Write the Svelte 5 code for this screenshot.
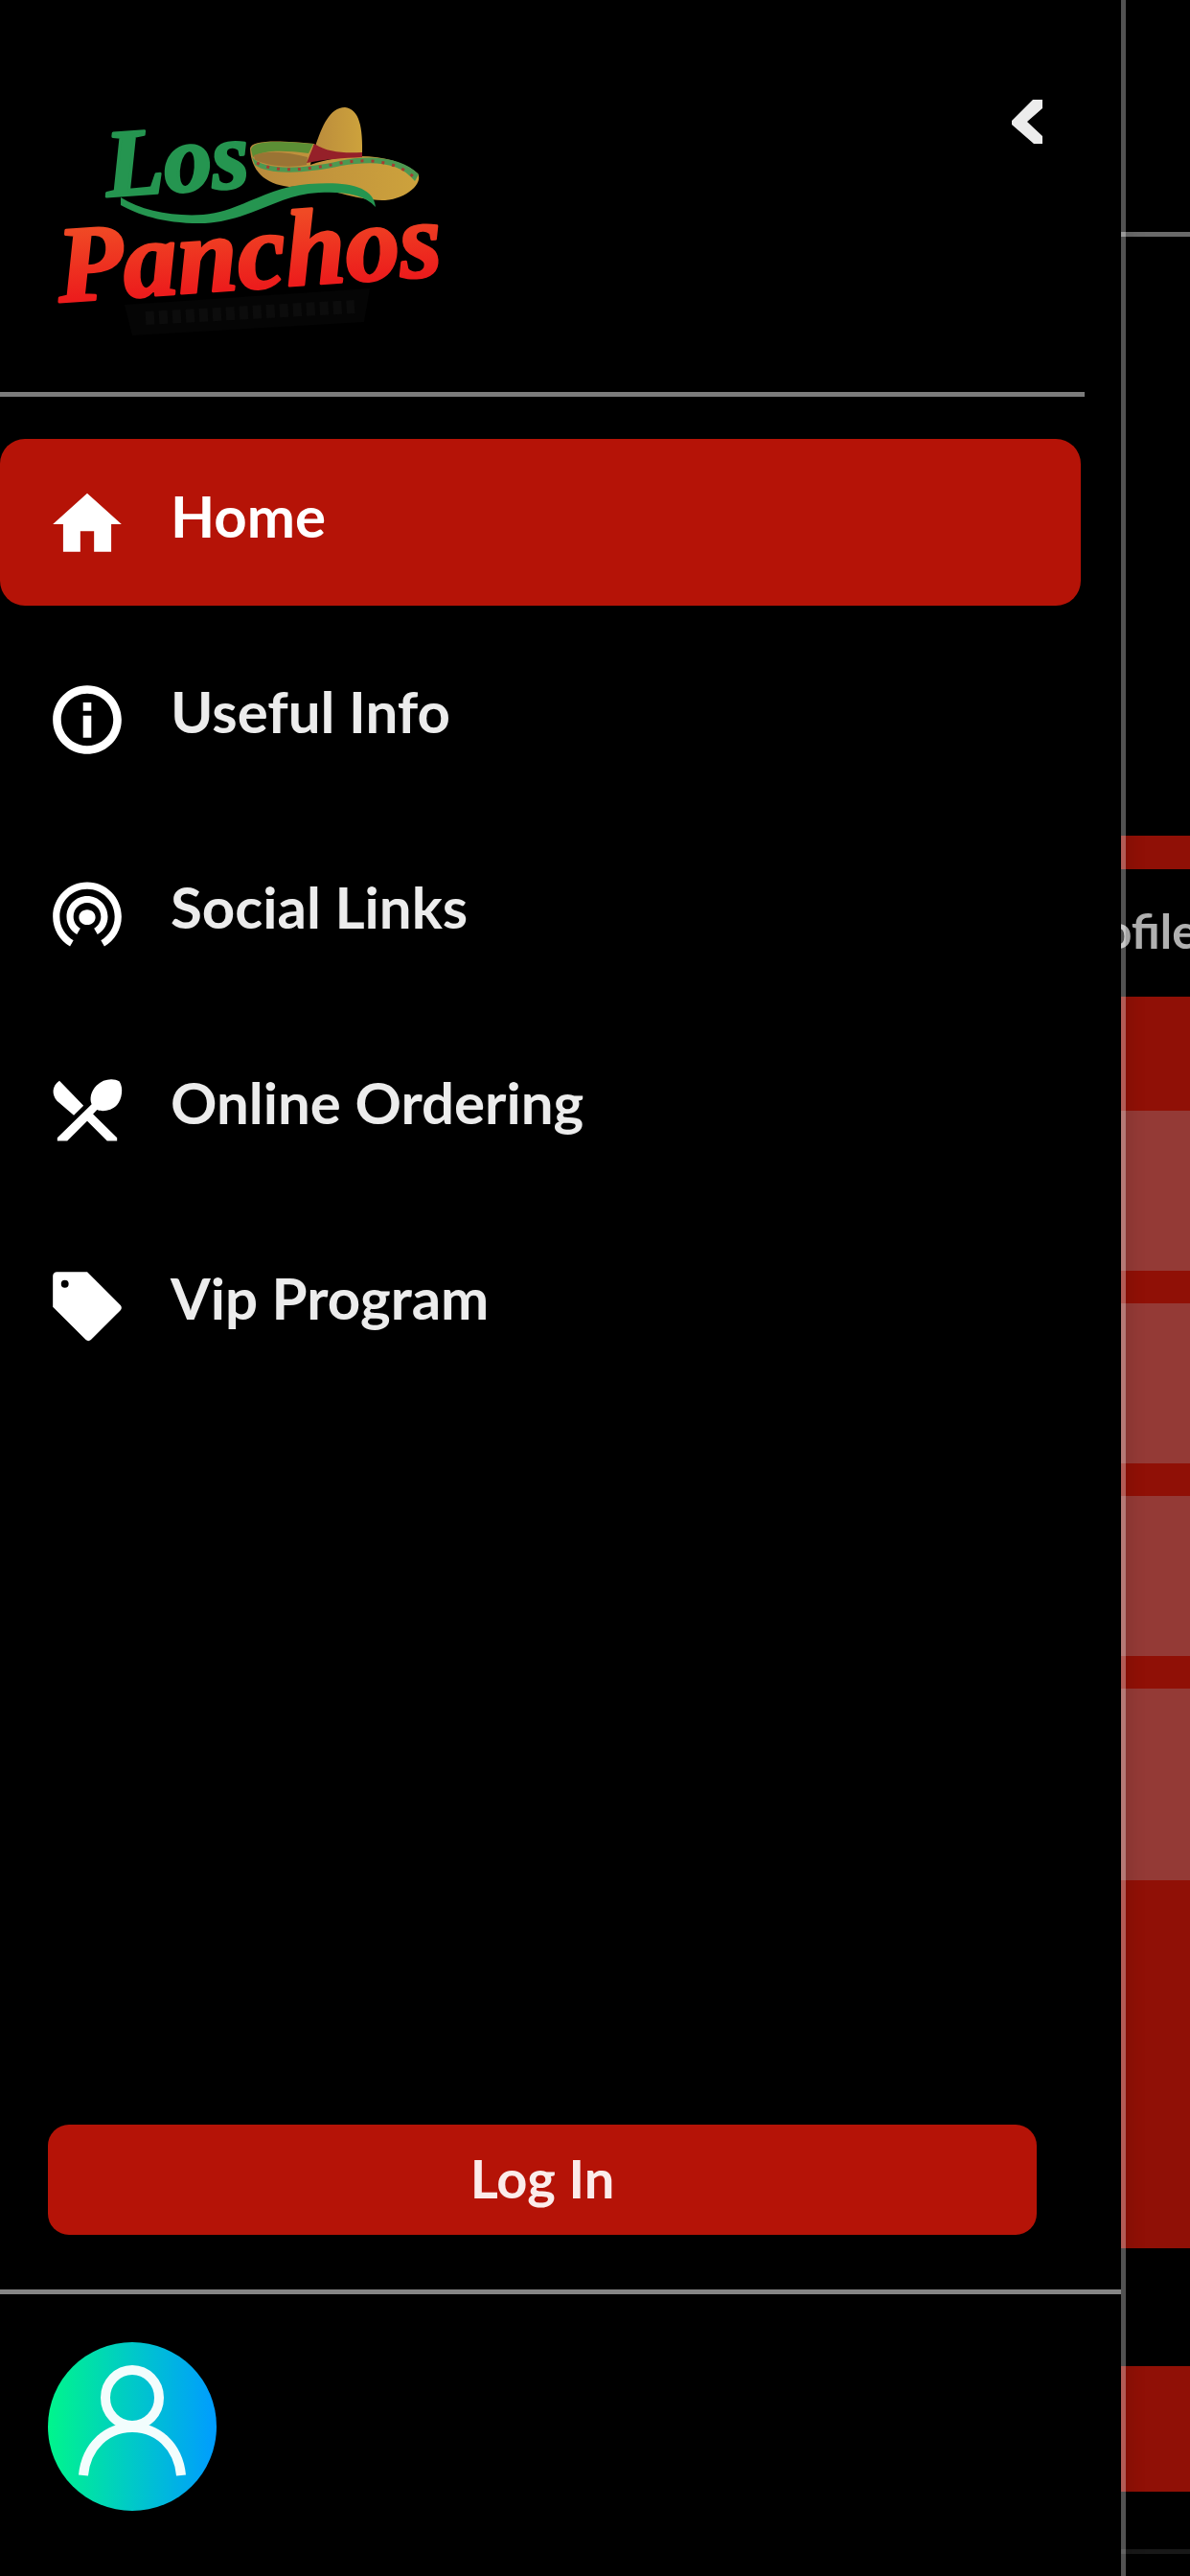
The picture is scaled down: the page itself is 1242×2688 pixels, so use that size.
<script>
  const items = [
    {
      label: 'Home',
      href: '#home',
      icon: 'M10 20v-6h4v6h5v-8h3L12 3 2 12h3v8z'
    },
    {
      label: 'Useful Info',
      href: '#info',
      icon: 'M10.8 7h2.4v2.4h-2.4zm0 3.8h2.4v6.4h-2.4zM12 2C6.48 2 2 6.48 2 12s4.48 10 10 10 10-4.48 10-10S17.52 2 12 2zm0 17.6c-4.2 0-7.6-3.4-7.6-7.6s3.4-7.6 7.6-7.6 7.6 3.4 7.6 7.6-3.4 7.6-7.6 7.6z'
    },
    {
      label: 'Social Links',
      href: '#social',
      icon: 'M12 10.4c-1.4 0-2.4 1-2.4 2.2s1 2.2 2.4 2.2 2.4-1 2.4-2.2-1-2.2-2.4-2.2zm6 2c0-3.31-2.69-6-6-6s-6 2.69-6 6c0 2.22 1.21 4.15 3 5.19l1-1.74c-1.19-.7-2-1.97-2-3.45 0-2.21 1.79-4 4-4s4 1.79 4 4c0 1.48-.81 2.75-2 3.45l1 1.74c1.79-1.04 3-2.97 3-5.19zM12 2.4C6.48 2.4 2 6.88 2 12.4c0 3.7 2.01 6.92 4.99 8.65l1-1.73C5.61 17.93 4 15.36 4 12.4c0-4.42 3.58-8 8-8s8 3.58 8 8c0 2.96-1.61 5.53-4 6.92l1 1.73c2.99-1.73 5-4.95 5-8.65 0-5.52-4.48-10-10-10z'
    },
    {
      label: 'Online Ordering',
      href: '#ordering',
      icon: 'M8.1 13.34l2.83-2.83L3.91 3.3C1.6 4.9 1.7 7.4 3.2 9.16l4.9 4.18zm6.78-1.61c1.53.71 4.2.31 5.8-1.38C22.2 8.6 22.6 5.3 21.4 3.5c-1.9-1.1-4.8-.7-6.7 1.2-1.6 1.6-2.1 3.9-1.4 5.4L3.3 19.9v.9h2.9L12 15l5.8 5.8h2.9v-.9L13.7 13l1.18-1.27z'
    },
    {
      label: 'Vip Program',
      href: '#vip',
      icon: 'M12 2H3.2C2.5 2 2 2.5 2 3.2V12.2L11.6 21.8c.5.4 1 .4 1.5 0L21.7 13.2c.4-.5.4-1 0-1.5L12 2zM5.5 6.6a1.1 1.1 0 1 1 0-2.2 1.1 1.1 0 0 1 0 2.2z'
    }
  ];

  let active = 'Home';
</script>

<div class="app">
  <aside class="drawer">
    <header class="drawer-header">
      <svg class="logo" viewBox="0 0 450 290" role="img" aria-label="Los Panchos">
        <defs>
          <linearGradient id="red" x1="0" y1="0" x2="0" y2="1">
            <stop offset="0.2" stop-color="#f04a25" />
            <stop offset="0.8" stop-color="#ec1c1c" />
          </linearGradient>
          <linearGradient id="straw" x1="0" y1="0" x2="1" y2="0">
            <stop offset="0" stop-color="#b98a3c" />
            <stop offset="1" stop-color="#cda23c" />
          </linearGradient>
        </defs>

        <!-- banner under the name -->
        <path d="M90 238L346 221L340 256L98 270Z" fill="#050505" />
        <path d="M112 252L330 240" stroke="#0c0c0c" stroke-width="14" stroke-dasharray="9 5" />

        <text class="word los" x="72" y="125" transform="rotate(-4 72 125)">Los</text>

        <!-- sombrero -->
        <path d="M221 75C222 66 250 66 288 70L284 92C330 76 375 83 396 101C402 111 385 127 362 129C330 130 300 113 262 115C236 112 222 98 221 75Z" fill="url(#straw)" />
        <path d="M222 76C224 66 250 67 287 70L282 80C256 77 235 76 224 84Z" fill="#5c8f35" />
        <path d="M225 82C240 76 262 79 281 84L280 92C258 96 238 92 226 87Z" fill="#9a7434" />
        <path d="M289 73C296 52 304 32 320 32C335 34 339 52 338 83C318 86 300 85 284 88Z" fill="url(#straw)" />
        <path d="M288 70C302 79 318 80 338 79V84C318 85 300 86 280 90Z" fill="#952029" />
        <path d="M223 84C236 99 280 96 314 88C350 80 382 86 397 102L393 109C376 88 348 88 316 93C280 101 240 103 226 92Z" fill="#4d9851" />
        <path d="M228 90C250 101 282 97 316 90C350 84 378 91 392 105" fill="none" stroke="#a83b31" stroke-width="3" stroke-dasharray="3 8" />

        <text class="word panchos" x="22" y="235" transform="rotate(-4 22 235)">Panchos</text>

        <path d="M86 126C108 140 140 146 172 144C212 140 236 116 282 112C322 109 350 114 352 136C338 120 308 119 282 122C244 128 216 151 174 153C132 154 104 144 86 134Z" fill="#259550" />
      </svg>

      <button class="close" aria-label="Close menu">
        <svg viewBox="0 0 36 48"><path d="M22 2H32V11L16 25L32 40V48H23L0 28V24Z" /></svg>
      </button>
    </header>

    <nav class="menu">
      {#each items as item}
        <a href={item.href} class:active={item.label === active} on:click={() => (active = item.label)}>
          <svg viewBox="0 0 24 24" aria-hidden="true"><path d={item.icon} /></svg>
          <span>{item.label}</span>
        </a>
      {/each}
    </nav>

    <div class="login">
      <button>Log In</button>
    </div>

    <footer class="account">
      <a href="#profile" class="avatar" aria-label="Account">
        <svg viewBox="0 0 176 176">
          <ellipse cx="88" cy="58" rx="28" ry="29" />
          <path d="M37 139C40 108 62 89 88 89S136 108 139 139" />
        </svg>
      </a>
    </footer>
  </aside>

  <main class="page">
    <div class="topbar"></div>
    <div class="hero"></div>
    <div class="stripe"></div>
    <div class="tab"><span>Profile</span></div>
    <section class="cards">
      <div class="card"></div>
      <div class="card"></div>
      <div class="card"></div>
      <div class="card tall"></div>
    </section>
    <div class="band"></div>
    <div class="bottom-line"></div>
  </main>
</div>

<style>
  :global(body) {
    margin: 0;
    background: #000;
  }

  .app {
    display: flex;
    min-height: 100vh;
    overflow: hidden;
    background: #000;
    color: #ececec;
    font-family: Lato, 'Open Sans', sans-serif;
    font-weight: 700;
  }

  /* Drawer */
  .drawer {
    flex: 0 0 auto;
    box-sizing: border-box;
    width: 94.6%;
    margin-right: -5px;
    z-index: 1;
    display: flex;
    flex-direction: column;
    background: #000;
    background-clip: padding-box;
    border-right: 5px solid rgba(255, 255, 255, 0.32);
    box-shadow: 0 0 20px rgba(0, 0, 0, 0.15);
  }

  .drawer-header {
    display: flex;
    justify-content: space-between;
    align-items: flex-start;
    height: 329px;
    margin-right: 38px;
    padding: 80px 40px 0;
    border-bottom: 5px solid #7c7c7c;
  }

  .logo {
    width: 450px;
    height: 290px;
  }

  .word {
    font-family: 'Liberation Serif', serif;
    font-weight: 700;
    font-style: italic;
    stroke-linejoin: round;
  }

  .los {
    font-size: 100px;
    fill: #259550;
    stroke: #259550;
    stroke-width: 3;
  }

  .panchos {
    font-size: 113px;
    fill: url(#red);
    stroke: url(#red);
    stroke-width: 3;
  }

  .close {
    margin-top: 22px;
    padding: 0;
    border: 0;
    background: none;
    line-height: 0;
    cursor: pointer;
  }

  .close svg {
    width: 36px;
    height: 48px;
    fill: #ececec;
  }

  .menu {
    display: flex;
    flex-direction: column;
    gap: 30px;
    margin: 44px 42px 0 0;
  }

  .menu a {
    display: flex;
    align-items: flex-start;
    gap: 44px;
    padding: 46px 48px 42px;
    border-radius: 26px;
    color: inherit;
    font-size: 60px;
    line-height: 68px;
    text-decoration: none;
  }

  .menu a.active {
    background: #b51307;
    color: #fff;
  }

  .menu svg {
    width: 86px;
    height: 86px;
    fill: #fff;
  }

  .login {
    margin-top: auto;
    padding: 0 88px 57px 50px;
  }

  .login button {
    display: block;
    width: 100%;
    height: 115px;
    padding: 0 0 4px;
    border: 0;
    border-radius: 22px;
    background: #b51307;
    color: #fbeceb;
    font: inherit;
    font-size: 56px;
    cursor: pointer;
  }

  .account {
    padding: 50px 50px 68px;
    border-top: 5px solid #868686;
  }

  .avatar {
    display: block;
    width: 176px;
    height: 176px;
    border-radius: 50%;
    background: linear-gradient(90deg, #00f58c, #00c9c8 50%, #009cff);
  }

  .avatar path,
  .avatar ellipse {
    fill: none;
    stroke: #f2fdfd;
    stroke-width: 10;
  }

  /* Page showing beside the drawer */
  .page {
    flex: 1;
    min-width: 0;
    overflow: hidden;
  }

  .topbar {
    height: 242px;
    border-bottom: 5px solid #6a6a6a;
  }

  .hero {
    height: 625px;
  }

  .stripe {
    height: 35px;
    background: #901006;
  }

  .tab {
    display: flex;
    justify-content: flex-end;
    align-items: center;
    box-sizing: border-box;
    height: 133px;
    margin-right: -8px;
    padding-bottom: 6px;
    color: #b0b0b0;
    font-size: 50px;
  }

  .cards {
    display: flex;
    flex-direction: column;
    gap: 34px;
    padding: 119px 0 384px;
    background: #901006;
  }

  .card {
    height: 167px;
    background: #943a36;
  }

  .card.tall {
    height: 200px;
  }

  .band {
    height: 131px;
    margin-top: 123px;
    background: #901006;
  }

  .bottom-line {
    height: 5px;
    margin-top: 60px;
    background: #181818;
  }
</style>
